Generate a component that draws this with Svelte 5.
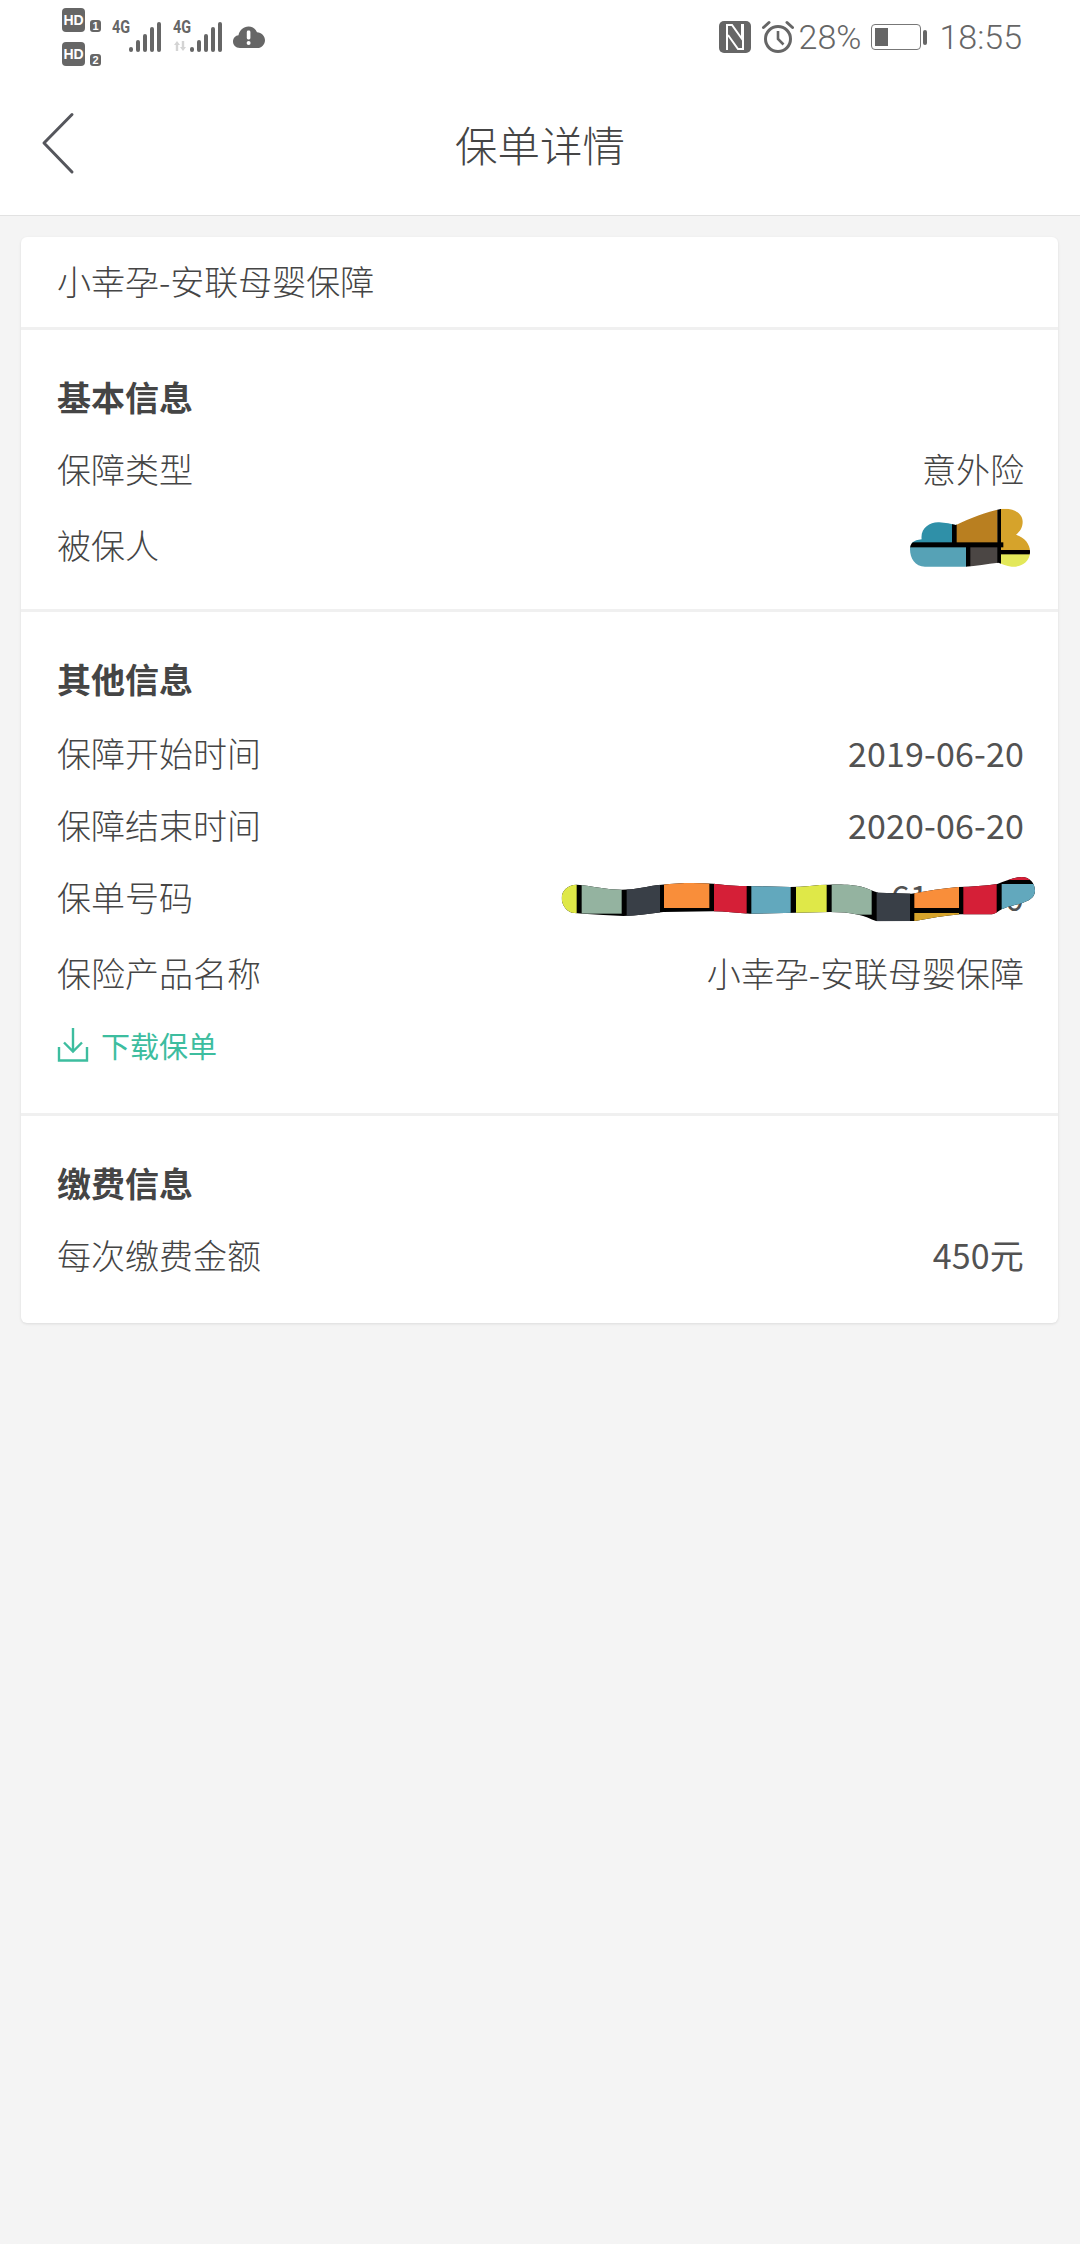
<script>
    const basicRows = [
        { label: "保障类型", value: "意外险" },
        { label: "被保人", value: "", tall: true, mask: "person" },
    ];
    const otherRows = [
        { label: "保障开始时间", value: "2019-06-20", first: true, num: true },
        { label: "保障结束时间", value: "2020-06-20", num: true },
        { label: "保单号码", value: "000\u2007\u2007\u2007\u2007\u2007\u2007\u2007\u2007\u200761\u2007\u2007\u2007\u20070", mask: "policy", num: true },
        { label: "保险产品名称", value: "小幸孕-安联母婴保障", tall: true },
    ];
    const barHeights = [5, 12, 18, 25, 30];
</script>

<main>
    <div class="status">
        <div class="status-left">
            <div class="hd-col">
                <div class="hd-line"><span class="hd">HD</span><span class="sim">1</span></div>
                <div class="hd-line"><span class="hd">HD</span><span class="sim">2</span></div>
            </div>
            <div class="signal">
                <span class="net">4G</span>
                <div class="bars">
                    {#each barHeights as h}
                        <i style={`height: ${h}px`}></i>
                    {/each}
                </div>
            </div>
            <div class="signal second">
                <div class="net-col">
                    <span class="net">4G</span>
                    <svg class="arrows" width="15" height="10" viewBox="0 0 15 10"><path d="M4 0 L7 4 H5.2 V10 H2.8 V4 H1 Z M8.8 0 H11.2 V6 H13 L10 10 L7 6 H8.8 Z" fill="#d4d4d4" /></svg>
                </div>
                <div class="bars">
                    {#each barHeights as h}
                        <i style={`height: ${h}px`}></i>
                    {/each}
                </div>
            </div>
            <svg class="cloud" width="32" height="22" viewBox="0 0 32 22">
                <path d="M7 22 C2.5 22 0 19 0 15.5 C0 12 2.5 9.5 5.5 9.2 C6.5 4 10.5 0.5 15.5 0.5 C19.5 0.5 22.5 2.8 24 6.2 C28.5 6.5 32 10 32 14.2 C32 18.5 28.5 22 24.5 22 Z" fill="#666" />
                <rect x="13.8" y="4.5" width="3.6" height="9" rx="1.4" fill="#fff" />
                <circle cx="15.6" cy="17" r="2" fill="#fff" />
            </svg>
        </div>
        <div class="status-right">
            <svg class="nfc" width="32" height="32" viewBox="0 0 32 32" fill="none">
                <rect width="32" height="32" rx="5" fill="#666" />
                <path d="M8 29 V4 H13 L23 18 V3" stroke="#fff" stroke-width="2" />
                <path d="M24 3 V28 H19 L9 14" stroke="#fff" stroke-width="2" />
            </svg>
            <svg class="alarm" width="34" height="34" viewBox="0 0 34 34" fill="none" stroke="#666">
                <circle cx="17" cy="19" r="12.5" stroke-width="3" />
                <path d="M17 11 V19 L22.5 24.5" stroke-width="2.6" />
                <path d="M2.5 7.5 L8 2.5 M31.5 7.5 L26 2.5" stroke-width="3" stroke-linecap="round" />
            </svg>
            <span class="pct">28%</span>
            <div class="battery"><div class="level"></div></div>
            <div class="nub"></div>
            <span class="clock">18:55</span>
        </div>
    </div>

    <header>
        <svg class="back" width="34" height="64" viewBox="0 0 34 64" fill="none">
            <path d="M31 2.5 L3 31 L31 60" stroke="#55565c" stroke-width="3" stroke-linecap="round" stroke-linejoin="round" />
        </svg>
        <h1>保单详情</h1>
    </header>

    <div class="content">
        <div class="card">
            <div class="name">小幸孕-安联母婴保障</div>

            <section class="basic">
                <h2>基本信息</h2>
                {#each basicRows as row}
                    {@render infoRow(row)}
                {/each}
            </section>

            <section class="other">
                <h2>其他信息</h2>
                {#each otherRows as row}
                    {@render infoRow(row)}
                {/each}
                <div class="download">
                    <svg width="32" height="36" viewBox="0 0 32 36" fill="none" stroke="#3dbd9f" stroke-width="2.4">
                        <path d="M16 1 V24 M7 15.5 L16 24.5 L25 15.5" />
                        <path d="M2 20 V33.5 H30 V20" />
                    </svg>
                    <span>下载保单</span>
                </div>
            </section>

            <section class="fee">
                <h2>缴费信息</h2>
                <div class="row"><span>每次缴费金额</span><span class="value num">450元</span></div>
            </section>
        </div>
    </div>
</main>

{#snippet infoRow(row)}
    <div class="row" class:tall={row.tall} class:first={row.first}>
        <span>{row.label}</span>
        <span class="value" class:num={row.num}>{row.value}</span>
        {#if row.mask === "person"}
            <svg class="mask mask-person" width="180" height="90" viewBox="0 0 540 270">
                <defs>
                    <clipPath id="person-clip">
                        <path d="M90 178 C90 160 100 150 125 148 C120 115 150 95 178 97 C195 98 215 102 228 105 C270 85 320 65 362 57 C400 52 428 70 428 95 C428 112 420 124 408 134 C435 142 452 165 450 188 C448 215 425 232 395 230 C380 228 365 222 355 218 C320 222 290 228 255 230 L135 230 C105 230 90 205 90 178 Z" />
                    </clipPath>
                </defs>
                <g clip-path="url(#person-clip)">
                    <rect x="80" y="40" width="150" height="120" fill="#2f90a8" />
                    <rect x="228" y="40" width="125" height="120" fill="#b97f20" />
                    <rect x="360" y="40" width="100" height="140" fill="#d6a32b" />
                    <rect x="80" y="170" width="180" height="70" fill="#56a2b6" />
                    <rect x="270" y="170" width="85" height="70" fill="#4b4644" />
                    <rect x="362" y="192" width="100" height="50" fill="#e3e85a" />
                    <rect x="80" y="157" width="290" height="15" fill="#000" />
                    <rect x="216" y="40" width="14" height="120" fill="#000" />
                    <rect x="352" y="40" width="11" height="195" fill="#000" />
                    <rect x="258" y="160" width="13" height="80" fill="#000" />
                    <rect x="360" y="180" width="100" height="13" fill="#000" />
                </g>
            </svg>
        {:else if row.mask === "policy"}
            <svg class="mask mask-policy" width="520" height="80" viewBox="0 0 1560 240">
                <defs>
                    <clipPath id="policy-clip">
                        <path d="M65 108 C65 85 85 68 110 68 C160 72 200 83 245 83 C290 83 320 72 365 68 C420 62 470 62 520 65 C560 70 590 72 625 72 L750 75 C790 75 830 68 868 68 C900 66 940 68 965 74 C985 80 1000 88 1015 92 L1115 95 C1160 88 1210 78 1255 75 C1295 74 1335 72 1372 66 C1395 58 1420 45 1445 45 C1470 45 1486 65 1485 88 C1484 108 1465 118 1440 125 C1420 130 1395 135 1380 145 C1370 152 1365 157 1350 157 L1260 157 C1215 160 1170 170 1125 177 L1010 178 C990 170 975 162 955 158 C930 152 900 150 870 150 L630 155 C590 153 555 148 520 148 L370 150 C330 155 290 162 250 162 C210 160 170 158 130 155 L95 152 C75 145 65 125 65 108 Z" />
                    </clipPath>
                </defs>
                <g clip-path="url(#policy-clip)">
                    <rect x="60" y="40" width="1440" height="150" fill="#000" />
                    <rect x="60" y="40" width="50" height="150" fill="#dfe848" />
                    <rect x="125" y="40" width="120" height="115" fill="#94b3a0" />
                    <rect x="260" y="40" width="100" height="150" fill="#393f47" />
                    <rect x="372" y="40" width="136" height="98" fill="#f98e3a" />
                    <rect x="522" y="40" width="98" height="150" fill="#d51f37" />
                    <rect x="634" y="40" width="118" height="150" fill="#62a8bd" />
                    <rect x="768" y="40" width="92" height="150" fill="#dfe848" />
                    <rect x="875" y="40" width="120" height="118" fill="#94b3a0" />
                    <rect x="1010" y="40" width="100" height="150" fill="#393f47" />
                    <rect x="1123" y="40" width="134" height="98" fill="#f98e3a" />
                    <rect x="1123" y="153" width="134" height="30" fill="#d6a32b" />
                    <rect x="1270" y="40" width="100" height="150" fill="#d51f37" />
                    <rect x="1385" y="66" width="110" height="100" fill="#62a8bd" />
                    <rect x="1385" y="40" width="110" height="14" fill="#d51f37" />
                </g>
            </svg>
        {/if}
    </div>
{/snippet}

<style>
    :global(body) {
        margin: 0;
        background: #f4f4f4;
    }

    main {
        width: 1080px;
        height: 2244px;
        background: #f4f4f4;
        color: #454545;
        font-family: "Noto Sans CJK SC", "Noto Sans", sans-serif;
        font-size: 34px;
        font-weight: 300;
    }

    .status {
        height: 76px;
        box-sizing: border-box;
        background: #fff;
        padding: 0 58px 0 62px;
        display: flex;
        align-items: center;
        justify-content: space-between;
        color: #666;
    }

    .status-left {
        display: flex;
        align-items: flex-start;
        height: 76px;
    }

    .hd-col {
        display: flex;
        flex-direction: column;
        gap: 10px;
        padding-top: 8px;
    }

    .hd-line {
        display: flex;
        align-items: flex-end;
        gap: 5px;
        height: 24px;
    }

    .hd {
        width: 23px;
        height: 24px;
        border-radius: 4px;
        background: #666;
        color: #fff;
        font: 700 14px/24px "Liberation Sans", sans-serif;
        text-align: center;
    }

    .sim {
        width: 11px;
        height: 12px;
        border-radius: 3px;
        background: #666;
        color: #fff;
        font: 700 11px/12px "Liberation Sans", sans-serif;
        text-align: center;
    }

    .signal {
        display: flex;
        align-items: flex-end;
        height: 52px;
        margin-left: 11px;
    }

    .signal.second {
        margin-left: 12px;
    }

    .net-col {
        display: flex;
        flex-direction: column;
        align-self: flex-start;
        padding-top: 18px;
    }

    .signal > .net {
        align-self: flex-start;
        margin-top: 18px;
    }

    .net {
        font: 700 18px/18px "Roboto", sans-serif;
        width: 17px;
        white-space: nowrap;
        transform: scaleX(0.8);
        transform-origin: left;
    }

    .arrows {
        margin-top: 5px;
    }

    .bars {
        display: flex;
        align-items: flex-end;
        gap: 3px;
    }

    .bars i {
        display: block;
        width: 4px;
        border-radius: 2px;
        background: #666;
    }

    .cloud {
        margin: 26px 0 0 11px;
    }

    .status-right {
        display: flex;
        align-items: center;
        height: 76px;
        position: relative;
        top: -1px;
    }

    .alarm {
        margin-left: 10px;
    }

    .pct {
        font: 300 34px/40px "Roboto", sans-serif;
        margin-left: 4px;
    }

    .battery {
        width: 50px;
        height: 26px;
        box-sizing: border-box;
        margin-left: 10px;
        border: 1.5px solid #777;
        border-radius: 4px;
        padding: 3px;
    }

    .level {
        width: 13px;
        height: 100%;
        background: #666;
    }

    .nub {
        width: 4px;
        height: 15px;
        margin-left: 2px;
        border-radius: 2px;
        background: #666;
    }

    .clock {
        font: 300 34px/40px "Roboto", sans-serif;
        margin-left: 12px;
    }

    header {
        height: 140px;
        box-sizing: border-box;
        background: #fff;
        border-bottom: 1px solid #e2e2e2;
        position: relative;
        display: flex;
        align-items: center;
        justify-content: center;
    }

    .back {
        position: absolute;
        left: 41px;
        top: 36px;
    }

    h1 {
        margin: -5px 0 0;
        font-size: 42.5px;
        font-weight: 300;
    }

    .content {
        padding: 21px 22px 0 21px;
    }

    .card {
        background: #fff;
        border-radius: 6px;
        box-shadow: 0 1px 3px rgba(0, 0, 0, 0.1);
    }

    .name {
        height: 90px;
        line-height: 87px;
        padding-left: 36px;
    }

    section {
        border-top: 3px solid #f0f0f0;
        padding: 31px 34px 29px 36px;
    }

    section.basic {
        padding-bottom: 28px;
    }

    section.other {
        padding-bottom: 32px;
    }

    section.fee {
        padding-bottom: 32px;
    }

    h2 {
        margin: 0;
        height: 72px;
        line-height: 72px;
        font-size: 34px;
        font-weight: 700;
    }

    .row {
        position: relative;
        height: 72px;
        line-height: 72px;
        display: flex;
        justify-content: space-between;
    }

    .row.tall {
        margin-top: 4px;
    }

    .row.first {
        margin-top: 2px;
    }

    .value {
        white-space: pre;
    }

    .value.num {
        font-weight: 400;
        color: #525252;
        letter-spacing: 0.15px;
    }

    .mask {
        position: absolute;
        max-width: none;
    }

    .mask-person {
        right: -36px;
        top: -19px;
    }

    .mask-policy {
        right: -36px;
        top: 1px;
    }

    .download {
        height: 72px;
        display: flex;
        align-items: center;
        gap: 12px;
        color: #3dbd9f;
        font-size: 29px;
        font-weight: 400;
    }
</style>
